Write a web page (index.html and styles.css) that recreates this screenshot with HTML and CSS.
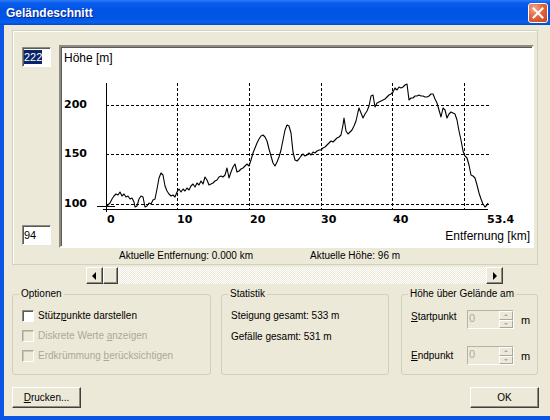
FILE: index.html
```html
<!DOCTYPE html>
<html lang="de">
<head>
<meta charset="utf-8">
<title>Geländeschnitt</title>
<link rel="stylesheet" href="styles.css">
</head>
<body>
<div class="window">
  <div class="titlebar">
    <span class="title">Geländeschnitt</span>
    <span class="close"><svg width="18" height="18" viewBox="0 0 18 18"><path d="M4.5 4.5 L13.5 13.5 M13.5 4.5 L4.5 13.5" stroke="#fff" stroke-width="2" stroke-linecap="square"/></svg></span>
  </div>
  <div class="frame">
    <div class="client">
      <div class="chart-panel">
        <div class="range">
          <div class="field"><span class="sel">222</span></div>
          <div class="field">94</div>
        </div>
        <div class="chart">
          <svg class="plot" viewBox="61 47 471 199" width="471" height="199">
            <g class="grid">
              <line x1="106" y1="105.5" x2="490" y2="105.5"/>
              <line x1="106" y1="154.5" x2="490" y2="154.5"/>
              <line x1="106" y1="204.5" x2="490" y2="204.5"/>
              <line x1="177.5" y1="83" x2="177.5" y2="209"/>
              <line x1="249.5" y1="83" x2="249.5" y2="209"/>
              <line x1="321.5" y1="83" x2="321.5" y2="209"/>
              <line x1="392.5" y1="83" x2="392.5" y2="209"/>
              <line x1="464.5" y1="83" x2="464.5" y2="209"/>
            </g>
            <g class="axis">
              <line x1="106.5" y1="83" x2="106.5" y2="212"/>
              <line x1="103" y1="209.5" x2="488" y2="209.5"/>
              <line x1="97" y1="206.5" x2="115" y2="206.5"/>
            </g>
            <polyline class="profile" points="106,207 108,205 110,203 112,199 114,196 116,194 118,195 120,192 122,196 124,194 126,197 128,196 130,199 132,198 134,202 135,207 137,206 139,199 141,196 143,197 145,207 147,206 149,203 151,204 153,200 155,199 157,189 159,178 161,173 163,175 165,186 167,191 169,194 171,196 173,195 175,197 177,192 179,189 181,192 183,189 185,191 187,188 189,190 191,186 193,184 195,187 197,183 199,185 201,181 203,184 205,177 207,180 209,185 211,184 213,183 215,181 217,180 219,177 221,176 223,177 225,175 227,168 229,178 231,172 233,167 235,164 237,172 239,171 241,169 243,168 245,166 247,164 249,166 251,160 253,153 255,148 257,143 259,139 261,136 263,135 265,137 267,141 269,149 271,156 273,163 275,166 277,162 279,157 281,150 283,140 285,130 287,125 289,126 291,133 293,152 295,160 297,161 299,159 301,156 303,154 305,156 307,155 309,153 311,155 313,152 315,153 317,151 319,150 321,150 323,148 325,147 327,145 329,143 331,141 333,142 335,140 337,138 339,137 341,135 343,125 344,118 346,131 348,134 350,132 352,130 354,126 356,121 358,112 359,108 361,113 363,118 365,114 367,111 369,106 371,96 373,95 375,107 377,103 379,102 381,101 383,100 385,99 387,97 389,95 391,94 393,92 395,88 397,90 399,87 401,88 403,87 405,85 407,84 409,100 411,98 413,98 415,96 417,96 419,95 421,96 423,96 425,97 427,97 429,96 431,94 433,94 435,99 437,103 439,110 441,117 443,108 445,110 447,118 449,114 451,112 453,113 455,114 457,120 459,131 461,140 463,151 465,156 467,158 469,165 471,175 473,176 475,178 477,185 479,193 481,199 483,204 485,207 487,205 488,203"/>
            <text class="cap" x="64" y="61.5">Höhe [m]</text>
            <text class="num" x="64" y="107.5">200</text>
            <text class="num" x="64" y="157">150</text>
            <text class="num" x="64" y="207">100</text>
            <text class="num" x="107" y="223">0</text>
            <text class="num" x="177" y="223">10</text>
            <text class="num" x="250" y="223">20</text>
            <text class="num" x="321" y="223">30</text>
            <text class="num" x="393" y="223">40</text>
            <text class="num" x="487" y="223">53.4</text>
            <text class="cap" x="530" y="240" text-anchor="end">Entfernung [km]</text>
          </svg>
        </div>
        <div class="status"><span class="s1">Aktuelle Entfernung: 0.000 km</span><span class="s2">Aktuelle Höhe: 96 m</span></div>
      </div>

      <div class="scrollbar">
        <div class="sb-btn"><span class="arr-l"></span></div>
        <div class="sb-thumb"></div>
        <div class="sb-track"></div>
        <div class="sb-btn"><span class="arr-r"></span></div>
      </div>

      <div class="groups">
        <fieldset class="grp opt">
          <legend>Optionen</legend>
          <div class="opt-body">
            <div class="cb-row"><span class="cb"></span><span>Stütz<u>p</u>unkte darstellen</span></div>
            <div class="cb-row dis"><span class="cb"></span><span>Diskrete Werte <u>a</u>nzeigen</span></div>
            <div class="cb-row dis"><span class="cb"></span><span>Erdkrümmung <u>b</u>erücksichtigen</span></div>
          </div>
        </fieldset>
        <fieldset class="grp stat">
          <legend>Statistik</legend>
          <div class="stat-body">
            <div class="stat-line">Steigung gesamt: 533 m</div>
            <div class="stat-line">Gefälle gesamt: 531 m</div>
          </div>
        </fieldset>
        <fieldset class="grp hoehe">
          <legend>Höhe über Gelände am</legend>
          <div class="hoehe-body">
            <div class="spin-row top">
              <span class="spin-lbl"><u>S</u>tartpunkt</span>
              <span class="spin"><span class="spin-in">0</span><span class="spin-btns"><span class="sp-b"><span class="sp-up"></span></span><span class="sp-b"><span class="sp-dn"></span></span></span></span>
              <span class="unit">m</span>
            </div>
            <div class="spin-row">
              <span class="spin-lbl"><u>E</u>ndpunkt</span>
              <span class="spin"><span class="spin-in">0</span><span class="spin-btns"><span class="sp-b"><span class="sp-up"></span></span><span class="sp-b"><span class="sp-dn"></span></span></span></span>
              <span class="unit">m</span>
            </div>
          </div>
        </fieldset>
      </div>

      <div class="buttons">
        <div class="btn"><u>D</u>rucken...</div>
        <div class="btn">OK</div>
      </div>
    </div>
  </div>
</div>
</body>
</html>
```

FILE: styles.css
```css
* { box-sizing: border-box; }
html, body { margin: 0; padding: 0; }
body {
  background: #ECE9D8;
  font-family: "Liberation Sans", Arial, sans-serif;
  font-size: 10px;
  color: #000;
}
.window {
  width: 550px;
  height: 420px;
  display: flex;
  flex-direction: column;
  background: #ECE9D8;
  overflow: hidden;
}
.titlebar {
  height: 25px;
  flex: none;
  display: flex;
  align-items: center;
  justify-content: space-between;
  padding: 0 2px 0 6px;
  background: linear-gradient(#2E7CF6 0%, #0A5DEC 12%, #0054E3 40%, #0055E5 75%, #0A62EE 88%, #0048D0 100%);
}
.title {
  color: #fff;
  font: bold 12px "Liberation Sans", Arial, sans-serif;
  text-shadow: 1px 1px #0A1E8C;
}
.close {
  width: 20px;
  height: 20px;
  border: 1px solid #fff;
  border-radius: 3px;
  background: radial-gradient(circle at 30% 25%, #F2A78C 0%, #E2663F 45%, #C2421D 100%);
  display: flex;
  align-items: center;
  justify-content: center;
}
.close svg { display: block; }
.frame {
  flex: 1;
  display: flex;
  border-left: 4px solid #0B55E4;
  border-bottom: 4px solid #0B55E4;
}
.client {
  flex: 1;
  display: flex;
  flex-direction: column;
  padding: 5px 0 0 8px;
}

/* chart panel */
.chart-panel {
  width: 526px;
  height: 235px;
  border: 1px solid #D0D0BF;
  box-shadow: inset 1px 1px #fff;
  display: grid;
  grid-template-columns: 29px 475px;
  grid-template-rows: 203px auto;
  column-gap: 8px;
  padding: 14px 0 0 9px;
}
.range {
  display: flex;
  flex-direction: column;
  justify-content: space-between;
  padding: 2px 0 3px;
}
.field {
  width: 29px;
  height: 20px;
  background: #fff;
  border: 1px solid;
  border-color: #8E8C80 #fff #fff #8E8C80;
  box-shadow: inset 1px 1px #5A5A55;
  font-size: 11px;
  line-height: 14px;
  padding: 2px 0 0 1px;
}
.sel {
  display: inline-block;
  background: #0A246A;
  color: #fff;
  line-height: 14px;
  margin-top: -1px;
}
.chart {
  width: 475px;
  height: 203px;
  background: #fff;
  border: 2px solid;
  border-color: #8E8C80 #fff #fff #8E8C80;
  box-shadow: inset 1px 1px #5A5A55;
}
.plot { display: block; }
.grid line {
  stroke: #000;
  stroke-width: 1;
  stroke-dasharray: 3 2;
  shape-rendering: crispEdges;
}
.axis line {
  stroke: #000;
  stroke-width: 1;
  shape-rendering: crispEdges;
}
.profile {
  fill: none;
  stroke: #000;
  stroke-width: 1.1;
  stroke-linejoin: round;
}
.cap { font: 12px "Liberation Sans", Arial, sans-serif; fill: #000; }
.num { font: bold 11px "DejaVu Sans", sans-serif; fill: #000; }
.status {
  grid-column: 2;
  margin-top: 1px;
  line-height: 13px;
  padding-left: 60px;
  white-space: nowrap;
}
.s1 { display: inline-block; width: 191px; }

/* scrollbar */
.scrollbar {
  width: 417px;
  height: 17px;
  margin: 2px 0 0 74px;
  display: flex;
}
.sb-btn, .sb-thumb {
  flex: none;
  width: 17px;
  height: 17px;
  background: #ECE9D8;
  border: 1px solid;
  border-color: #fff #404040 #404040 #fff;
  box-shadow: inset -1px -1px #8E8C80;
  display: flex;
  align-items: center;
  justify-content: center;
}
.sb-thumb { width: 15px; }
.sb-track {
  flex: 1;
  background-image: repeating-conic-gradient(#fff 0 25%, #ECE9D8 0 50%);
  background-size: 2px 2px;
}
.arr-l, .arr-r {
  width: 0;
  height: 0;
  border-top: 4px solid transparent;
  border-bottom: 4px solid transparent;
}
.arr-l { border-right: 4px solid #000; margin-left: -1px; }
.arr-r { border-left: 4px solid #000; margin-left: 1px; }

/* group boxes */
.groups {
  display: flex;
  margin-top: 4px;
}
.grp {
  margin: 0;
  padding: 0;
  height: 87px;
  min-width: 0;
  border: 1px solid #D0D0BF;
  border-radius: 3px;
}
.grp legend {
  margin-left: 6px;
  padding: 0 2px;
  line-height: 12px;
  font-size: 10px;
}
.opt { width: 199px; }
.stat { width: 168px; margin-left: 10px; }
.hoehe { width: 137px; margin-left: 12px; }

.opt-body {
  padding: 9px 0 0 9px;
  display: flex;
  flex-direction: column;
  gap: 7px;
}
.cb-row {
  height: 13px;
  display: flex;
  align-items: center;
  white-space: nowrap;
}
.cb {
  width: 12px;
  height: 12px;
  margin-right: 4px;
  background: #fff;
  border: 1px solid;
  border-color: #8E8C80 #fff #fff #8E8C80;
  box-shadow: inset 1px 1px #5A5A55;
}
.dis { color: #ACA899; }
.dis .cb { background: #ECE9D8; border-color: #ACA899 #fff #fff #ACA899; box-shadow: inset 1px 1px #C9C7BA; }

.stat-body {
  padding: 9px 0 0 9px;
  display: flex;
  flex-direction: column;
  gap: 8px;
}
.stat-line { line-height: 13px; white-space: nowrap; }

.hoehe-body {
  padding: 10px 0 0 9px;
  display: flex;
  flex-direction: column;
  gap: 17px;
}
.spin-row {
  height: 19px;
  display: flex;
  align-items: center;
}
.spin-row.top .spin-lbl { align-self: flex-start; margin-top: 0; }
.spin-lbl { width: 56px; line-height: 13px; }
.spin {
  width: 47px;
  height: 19px;
  display: flex;
  border: 1px solid;
  border-color: #B5B2A6 #fff #fff #B5B2A6;
  background: #ECE9D8;
}
.spin-in {
  flex: 1;
  font-size: 11px;
  line-height: 15px;
  padding-left: 1px;
  color: #ACA899;
}
.spin-btns {
  width: 14px;
  display: flex;
  flex-direction: column;
}
.sp-b {
  flex: 1;
  border: 1px solid;
  border-color: #fff #ACA899 #ACA899 #fff;
  display: flex;
  align-items: center;
  justify-content: center;
}
.sp-up, .sp-dn {
  width: 0;
  height: 0;
  border-left: 2px solid transparent;
  border-right: 2px solid transparent;
}
.sp-up { border-bottom: 2px solid #ACA899; }
.sp-dn { border-top: 2px solid #ACA899; }
.unit { margin-left: 7px; font-size: 11px; }

/* buttons */
.buttons {
  display: flex;
  justify-content: space-between;
  margin-top: 12px;
  padding-right: 11px;
}
.btn {
  width: 69px;
  height: 21px;
  background: #ECE9D8;
  border: 1px solid;
  border-color: #fff #404040 #404040 #fff;
  box-shadow: inset -1px -1px #8E8C80;
  display: flex;
  align-items: center;
  justify-content: center;
  line-height: 13px;
}
```
